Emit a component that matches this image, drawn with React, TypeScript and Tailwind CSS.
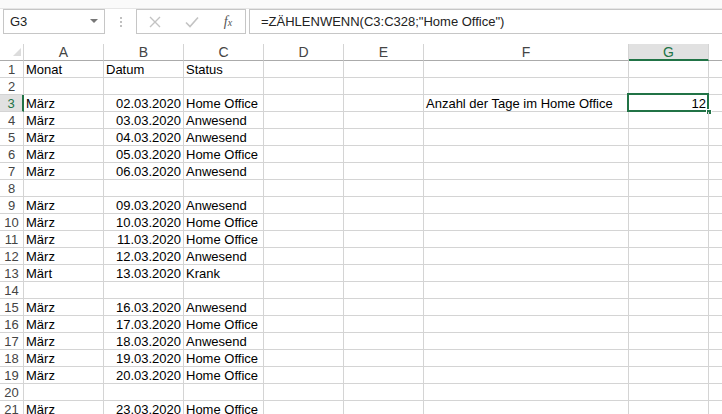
import React from "react";

type Row = { n: number; a?: string; b?: string; c?: string; f?: string; g?: string };

const rows: Row[] = [
  { n: 1, a: "Monat", b: "Datum", c: "Status" },
  { n: 2 },
  { n: 3, a: "März", b: "02.03.2020", c: "Home Office", f: "Anzahl der Tage im Home Office", g: "12" },
  { n: 4, a: "März", b: "03.03.2020", c: "Anwesend" },
  { n: 5, a: "März", b: "04.03.2020", c: "Anwesend" },
  { n: 6, a: "März", b: "05.03.2020", c: "Home Office" },
  { n: 7, a: "März", b: "06.03.2020", c: "Anwesend" },
  { n: 8 },
  { n: 9, a: "März", b: "09.03.2020", c: "Anwesend" },
  { n: 10, a: "März", b: "10.03.2020", c: "Home Office" },
  { n: 11, a: "März", b: "11.03.2020", c: "Home Office" },
  { n: 12, a: "März", b: "12.03.2020", c: "Anwesend" },
  { n: 13, a: "Märt", b: "13.03.2020", c: "Krank" },
  { n: 14 },
  { n: 15, a: "März", b: "16.03.2020", c: "Anwesend" },
  { n: 16, a: "März", b: "17.03.2020", c: "Home Office" },
  { n: 17, a: "März", b: "18.03.2020", c: "Anwesend" },
  { n: 18, a: "März", b: "19.03.2020", c: "Home Office" },
  { n: 19, a: "März", b: "20.03.2020", c: "Home Office" },
  { n: 20 },
  { n: 21, a: "März", b: "23.03.2020", c: "Home Office" },
];

const grid = "grid grid-cols-[24px_80px_80px_80px_80px_80px_205px_80px_1fr]";

function Cell({ children, right, className = "" }: { children?: React.ReactNode; right?: boolean; className?: string }) {
  return (
    <div
      className={`h-[17px] border-r border-b border-[#d4d4d4] flex items-end px-[2px] text-[13px] leading-[15px] text-black whitespace-nowrap overflow-visible ${right ? "justify-end" : ""} ${className}`}
    >
      {children}
    </div>
  );
}

export default function App() {
  return (
    <div className="w-[722px] h-[414px] overflow-hidden bg-white font-['Liberation_Sans',Arial,sans-serif] relative">
      {/* top formula area */}
      <div className="h-[44px] bg-white">
        <div className="h-[9px] border-b border-[#e6e6e6] bg-[#fafafa]" />
        <div className="flex items-start h-[25px] pl-[3px]">
          <div className="w-[102px] h-[25px] border border-[#c6c6c6] flex items-center pl-[6px] pr-[6px] justify-between">
            <span className="text-[13px] text-[#222]">G3</span>
            <svg width="8" height="5" viewBox="0 0 8 5"><path d="M0 0 L8 0 L4 4 Z" fill="#777" /></svg>
          </div>
          <div className="w-[31px] h-[25px] flex items-center justify-center">
            <div className="flex flex-col gap-[2px]">
              <div className="w-[2px] h-[2px] bg-[#c0c0c0]" />
              <div className="w-[2px] h-[2px] bg-[#c0c0c0]" />
              <div className="w-[2px] h-[2px] bg-[#c0c0c0]" />
            </div>
          </div>
          <div className="w-[110px] h-[25px] border border-[#c6c6c6] flex items-center">
            <div className="w-[36px] flex justify-center">
              <svg width="12" height="12" viewBox="0 0 12 12"><path d="M1 1 L11 11 M11 1 L1 11" stroke="#c3c3c3" strokeWidth="1.4" /></svg>
            </div>
            <div className="w-[38px] flex justify-center">
              <svg width="14" height="12" viewBox="0 0 14 12"><path d="M1 6.5 L5 10.5 L13 1.5" stroke="#c3c3c3" strokeWidth="1.6" fill="none" /></svg>
            </div>
            <div className="w-[34px] flex justify-center">
              <span className="font-['Liberation_Serif',serif] italic text-[14px] text-[#555] leading-none">
                f<span className="text-[10px]">x</span>
              </span>
            </div>
          </div>
          <div className="ml-[3px] flex-1 h-[25px] border border-[#c6c6c6] border-r-0 flex items-center pl-[11px]">
            <span className="text-[13px] text-[#222] whitespace-nowrap">=ZÄHLENWENN(C3:C328;"Home Office")</span>
          </div>
        </div>
        <div className="h-[10px]" />
      </div>

      {/* column headers */}
      <div className={`${grid} h-[17px]`}>
        <div className="border-r border-b border-[#ababab] border-r-[#d4d4d4] relative">
          <svg className="absolute left-[13px] top-[4px]" width="8" height="8" viewBox="0 0 8 8"><path d="M8 0 L8 8 L0 8 Z" fill="#dcdcdc" /></svg>
        </div>
        {["A", "B", "C", "D", "E", "F"].map((l) => (
          <div key={l} className="border-r border-b border-[#d4d4d4] border-b-[#ababab] flex items-center justify-center text-[14px] leading-none text-[#444]">
            {l}
          </div>
        ))}
        <div className="bg-[#e1e1e1] border-r border-[#d4d4d4] border-b-2 border-b-[#217346] flex items-center justify-center text-[14px] leading-none text-[#217346]">
          G
        </div>
        <div className="border-b border-[#ababab]" />
      </div>

      {/* rows */}
      {rows.map((r) => {
        const sel = r.n === 3;
        return (
          <div key={r.n} className={`${grid}`}>
            <div
              className={`h-[17px] border-b border-[#d4d4d4] flex items-end justify-center text-[13px] leading-[15px] ${
                sel ? "bg-[#e1e1e1] text-[#217346] border-r-2 border-r-[#217346]" : "text-[#444] border-r border-r-[#d4d4d4]"
              }`}
            >
              {r.n}
            </div>
            <Cell>{r.a}</Cell>
            <Cell right={r.n !== 1}>{r.b}</Cell>
            <Cell>{r.c}</Cell>
            <Cell />
            <Cell />
            <Cell>{r.f}</Cell>
            <Cell right className="relative">
              {r.g}
              {sel && (
                <>
                  <div className="absolute left-[-2px] top-[-2px] right-[-1px] bottom-[-1px] border-2 border-[#217346]" />
                  <div className="absolute right-[-4px] bottom-[-4px] w-[6px] h-[6px] bg-[#217346] border border-white" />
                </>
              )}
            </Cell>
            <div className="h-[17px] border-b border-[#d4d4d4]" />
          </div>
        );
      })}
    </div>
  );
}
